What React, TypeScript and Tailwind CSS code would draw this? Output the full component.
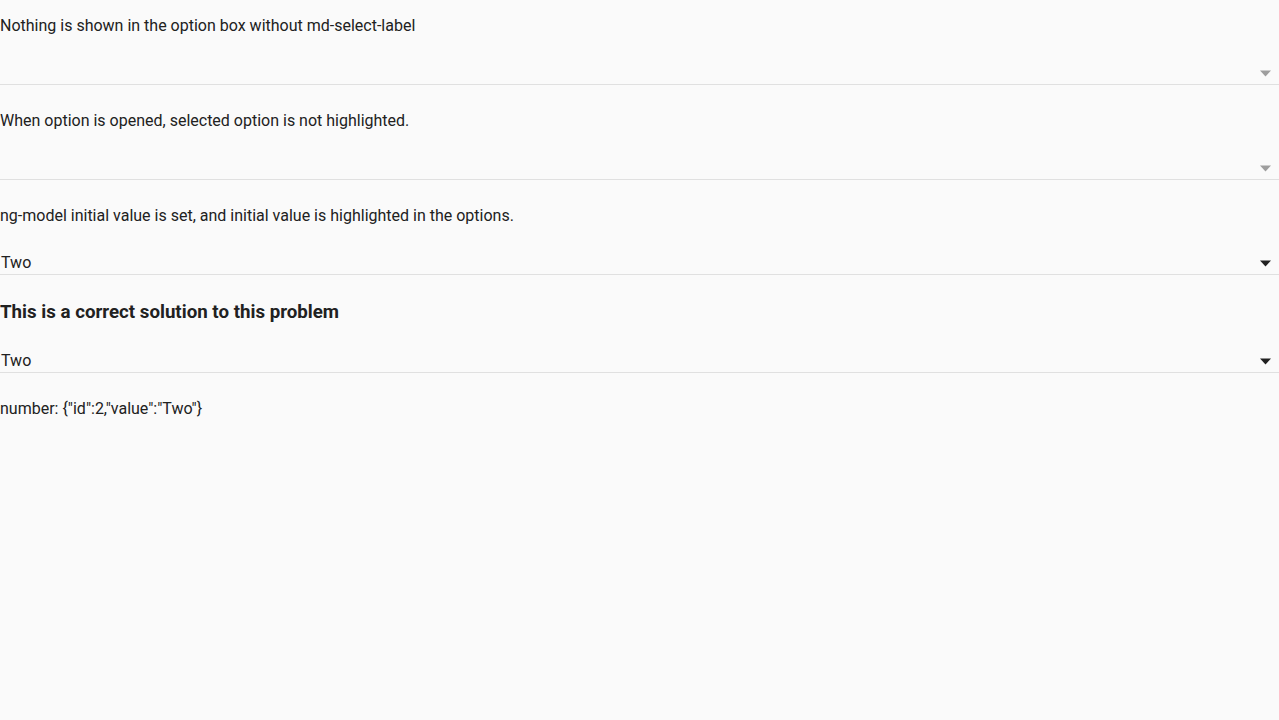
import React from "react";

function Arrow({ dark }: { dark: boolean }) {
  return (
    <svg width="11" height="7" viewBox="0 0 11 7" className="shrink-0 mr-[8px] mb-[7px]">
      <path d="M0 0.5 L11 0.5 L5.5 6.5 Z" fill={dark ? "#212121" : "#9e9e9e"} />
    </svg>
  );
}

function Select({ value }: { value?: string }) {
  return (
    <div className="flex items-end justify-between h-[27px] border-b border-[#e0e0e0]">
      <span className="pl-[1px] leading-5 mb-[1px]">{value ?? ""}</span>
      <Arrow dark={!!value} />
    </div>
  );
}

export default function App() {
  return (
    <div
      className="min-h-[720px] bg-[#fafafa] text-[#212121] text-[16px]"
      style={{ fontFamily: "Roboto, 'Liberation Sans', sans-serif" }}
    >
      <div className="pt-[16px]">
        <p className="leading-5">Nothing is shown in the option box without md-select-label</p>
        <div className="mt-[22px]">
          <Select />
        </div>
        <p className="leading-5 mt-[26px]">When option is opened, selected option is not highlighted.</p>
        <div className="mt-[22px]">
          <Select />
        </div>
        <p className="leading-5 mt-[26px]">ng-model initial value is set, and initial value is highlighted in the options.</p>
        <div className="mt-[22px]">
          <Select value="Two" />
        </div>
        <h3 className="font-bold text-[18.72px] leading-6 mt-[25px]">This is a correct solution to this problem</h3>
        <div className="mt-[22px]">
          <Select value="Two" />
        </div>
        <p className="leading-5 mt-[26px]">number: {'{"id":2,"value":"Two"}'}</p>
      </div>
    </div>
  );
}
